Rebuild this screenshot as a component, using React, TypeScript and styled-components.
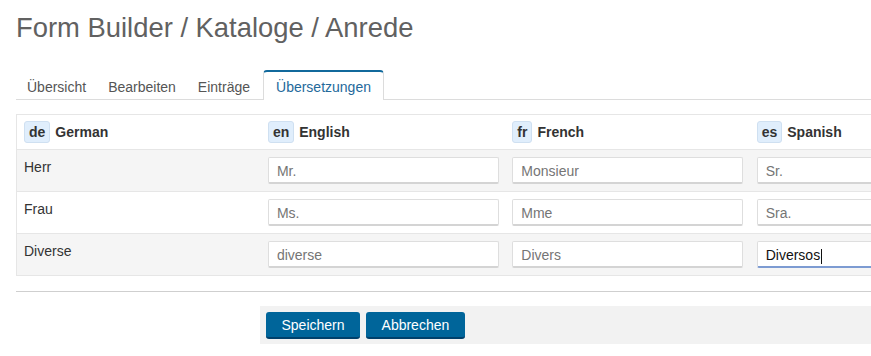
import React from "react";
import styled, { createGlobalStyle } from "styled-components";

const GlobalStyle = createGlobalStyle`
  html, body {
    margin: 0;
    padding: 0;
    overflow: hidden;
    background: #fff;
  }
  body {
    font-family: "Liberation Sans", Arial, sans-serif;
    font-size: 14px;
    color: #333;
  }
`;

interface ILanguage {
  code: string;
  name: string;
}

const languages: ILanguage[] = [
  { code: "de", name: "German" },
  { code: "en", name: "English" },
  { code: "fr", name: "French" },
  { code: "es", name: "Spanish" },
];

const rows = [
  { label: "Herr", values: ["Mr.", "Monsieur", "Sr."] },
  { label: "Frau", values: ["Ms.", "Mme", "Sra."] },
  { label: "Diverse", values: ["diverse", "Divers", "Diversos"] },
];

const tabs = ["Übersicht", "Bearbeiten", "Einträge", "Übersetzungen"];

const App = () => {
  return (
    <>
      <GlobalStyle />
      <PageSt>
        <TitleSt>Form Builder / Kataloge / Anrede</TitleSt>

        <TabBarSt>
          {tabs.map((tab, i) => (
            <TabSt key={tab} $active={i === tabs.length - 1}>
              {tab}
            </TabSt>
          ))}
        </TabBarSt>

        <TableSt>
          <colgroup>
            {languages.map((lang) => (
              <col key={lang.code} style={{ width: 244.4 }} />
            ))}
          </colgroup>
          <thead>
            <tr>
              {languages.map((lang) => (
                <HeadCellSt key={lang.code}>
                  <BadgeSt>{lang.code}</BadgeSt>
                  {lang.name}
                </HeadCellSt>
              ))}
            </tr>
          </thead>
          <tbody>
            {rows.map((row, r) => (
              <RowSt key={row.label} $striped={r % 2 === 0}>
                <CellSt>{row.label}</CellSt>
                {row.values.map((value, c) => {
                  const focused = r === rows.length - 1 && c === row.values.length - 1;
                  return (
                    <CellSt key={value}>
                      <InputWrapSt>
                        <InputSt defaultValue={value} $focused={focused} readOnly />
                        {focused && <CaretSt />}
                      </InputWrapSt>
                    </CellSt>
                  );
                })}
              </RowSt>
            ))}
          </tbody>
        </TableSt>

        <DividerSt />

        <ActionsSt>
          <ButtonSt>Speichern</ButtonSt>
          <ButtonSt>Abbrechen</ButtonSt>
        </ActionsSt>
      </PageSt>
    </>
  );
};

export default App;

const PageSt = styled.div`
  width: 1000px;
  padding: 0 0 0 16px;
`;

const TitleSt = styled.h1`
  margin: 13px 0 0;
  font-size: 27.4px;
  line-height: 1.1;
  font-weight: normal;
  color: #616161;
`;

const TabBarSt = styled.div`
  display: flex;
  margin-top: 27px;
  padding-left: 1px;
  border-bottom: 1px solid #dcdcdc;
`;

const TabSt = styled.div<{ $active?: boolean }>`
  margin-right: 2px;
  margin-bottom: -1px;
  padding: 5px 10px 3px;
  line-height: 20px;
  font-size: 14px;
  border-top: 2px solid transparent;
  border-radius: 4px 4px 0 0;
  color: #555;
  background: transparent;

  ${({ $active }) =>
    $active &&
    `
    margin-left: 1px;
    padding: 5px 12px 3px;
    color: #24699b;
    background: #fff;
    border-left: 1px solid #dcdcdc;
    border-right: 1px solid #dcdcdc;
    border-top-color: #11699c;
  `}
`;

const TableSt = styled.table`
  margin-top: 14px;
  width: 978px;
  table-layout: fixed;
  border-collapse: collapse;
  border: 1px solid #e6e6e6;
`;

const HeadCellSt = styled.th`
  padding: 6px 7px;
  height: 22px;
  text-align: left;
  vertical-align: middle;
  font-weight: bold;
  font-size: 14px;
  color: #333;
  background: #fff;
`;

const BadgeSt = styled.span`
  display: inline-block;
  margin-right: 5px;
  padding: 1px 4px;
  line-height: 18px;
  border: 1px solid #cfe0f1;
  border-radius: 3px;
  background: #e0eefc;
`;

const RowSt = styled.tr<{ $striped?: boolean }>`
  border-top: 1px solid #e6e6e6;
  background: ${({ $striped }) => ($striped ? "#f5f5f5" : "#fff")};
`;

const CellSt = styled.td`
  padding: 7px 6px 7px 7px;
  vertical-align: top;
  line-height: 20px;
  font-size: 14px;
  color: #333;
`;

const InputWrapSt = styled.span`
  position: relative;
  display: block;
  width: 231px;
`;

const InputSt = styled.input<{ $focused?: boolean }>`
  box-sizing: border-box;
  display: block;
  width: 231px;
  height: 27px;
  padding: 1px 8px 0;
  font-family: "Liberation Sans", Arial, sans-serif;
  font-size: 14px;
  color: ${({ $focused }) => ($focused ? "#111" : "#757575")};
  background: #fff;
  border: 1px solid #dedede;
  border-bottom: 2px solid ${({ $focused }) => ($focused ? "#7d9bd2" : "#d4d4d4")};
  border-radius: 2px;
  outline: none;
`;

const CaretSt = styled.span`
  position: absolute;
  left: 64px;
  top: 8px;
  width: 1px;
  height: 15px;
  background: #111;
`;

const DividerSt = styled.div`
  margin-top: 15px;
  height: 1px;
  background: #cfcfcf;
`;

const ActionsSt = styled.div`
  display: flex;
  gap: 6px;
  margin: 14px 0 0 244px;
  padding: 6px 6px 5px;
  background: #f2f2f2;
`;

const ButtonSt = styled.button`
  height: 27px;
  padding: 0 15.5px;
  font-family: "Liberation Sans", Arial, sans-serif;
  font-size: 14px;
  color: #fff;
  background: #00659a;
  border: none;
  border-bottom: 2px solid #00406b;
  border-radius: 3px;
  cursor: pointer;
`;
